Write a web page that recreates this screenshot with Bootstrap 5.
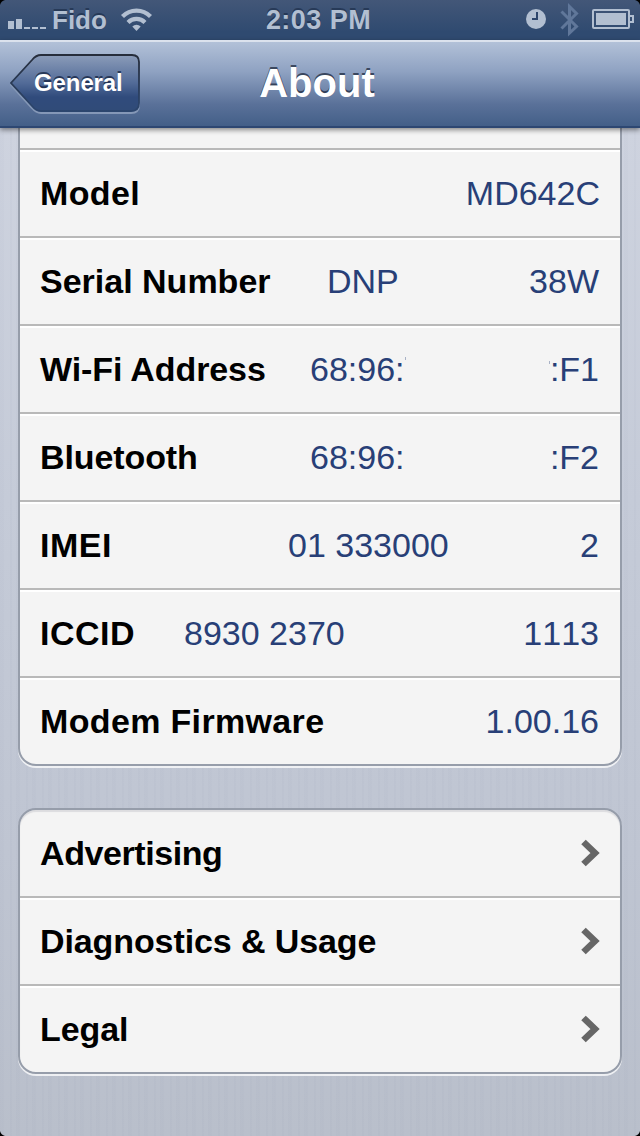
<!DOCTYPE html>
<html lang="en">
<head>
<meta charset="utf-8">
<meta name="viewport" content="width=device-width, initial-scale=1">
<title>About</title>
<link href="https://cdn.jsdelivr.net/npm/bootstrap@5.3.0/dist/css/bootstrap.min.css" rel="stylesheet">
<style>
body{width:640px;height:1136px;overflow:hidden;font-family:"Liberation Sans",Arial,sans-serif;
 background:repeating-linear-gradient(90deg,rgba(70,80,120,.02) 0 4px,transparent 4px 10px,rgba(70,80,120,.025) 10px 12px,transparent 12px 16px),linear-gradient(#ced3df 128px,#c5cbd8 500px,#bfc5d2 850px,#b9bfcb)}
.status-bar{height:40px;background:linear-gradient(#435778,#2f4a70 80%,#2f4a70);color:#b2bfd1;font-size:26px;font-weight:700;line-height:40px;text-shadow:0 -2px 0 rgba(20,36,62,.55);position:relative}
.status-bar svg{display:block}
.clock-text{position:absolute;left:0;right:3px;top:0;text-align:center;font-size:27px;letter-spacing:.45px}
.title-bar{height:88px;background:linear-gradient(#b2c1d8,#8fa2c2 35%,#5a7199 74%,#435f88);border-top:2px solid #dbe2ed;border-bottom:2px solid #2d4772;box-shadow:0 2px 5px rgba(0,0,0,.45);position:relative;z-index:2}
.title-bar h1{position:absolute;inset:0;margin:0;padding-right:6px;line-height:83px;font-size:40px;font-weight:700;color:#fff;text-align:center;text-shadow:0 -2px 0 rgba(30,42,62,.75)}
.back-btn{width:132px;height:62px;margin-left:9px;position:relative;z-index:1;color:#fff;font-size:24px;font-weight:700;line-height:60px;padding-left:25px;letter-spacing:-.1px;text-shadow:0 -2px 0 rgba(20,35,65,.75)}
.back-btn svg{position:absolute;left:0;top:0;z-index:-1}
.settings-group{margin:0 18px;border:2px solid #969daa;border-radius:18px;background:#f4f4f4;box-shadow:0 2px 0 rgba(255,255,255,.75);--bs-list-group-bg:#f4f4f4}
.first-group{border-top:0;border-radius:0 0 18px 18px;padding-top:20px}
.second-group{margin-top:42px;box-shadow:0 2px 0 rgba(255,255,255,.75),inset 0 2px 1px #dcdcdf}
.setting-row{height:88px;padding:0 20px;font-size:34px;line-height:86px;color:#000;background:transparent;border:0;border-top:2px solid #b9b9b9;box-shadow:inset 0 2px 0 #fff;white-space:nowrap}
.setting-row.list-group-item+.setting-row.list-group-item{border-top:2px solid #b9b9b9;margin:0}
.second-group .setting-row:first-child{height:86px;border-top:0;box-shadow:none}
.setting-value{color:#283f77;font-kerning:none;margin-right:1px}
.value-end{margin-right:0}
.w-serial{width:272px}.w-mac{width:289px}.w-imei{width:311px}.w-iccid{width:415px}
.track-wide{letter-spacing:.34px}.track-wider{letter-spacing:.5px}.track-tight{letter-spacing:-.42px}.track-snug{letter-spacing:-.1px}
.trace{position:absolute;width:1px;height:3px;background:#a9b2c6}
.screen-corner{position:absolute;width:6px;height:6px;z-index:5}
</style>
</head>
<body>
<header>
 <div class="status-bar d-flex align-items-center justify-content-between">
  <div class="d-flex align-items-center">
   <svg width="52" height="40" fill="#b2bfd1"><path d="M8 21h6v8H8zM16 19h6v10h-6zM24 27h6v2h-6zM32 27h6v2h-6zM40 27h6v2h-6z"/></svg>
   <span>Fido</span>
   <svg width="48" height="40" viewBox="0 0 48 40"><g fill="none" stroke="#b2bfd1" stroke-width="4.2"><path d="M15.5 16.5a19.5 19.5 0 0 1 28 0M21 22.5a12 12 0 0 1 17 0"/></g><path fill="#b2bfd1" d="M25.3 26.5a6 6 0 0 1 8.4 0l-4.2 4.5z"/></svg>
  </div>
  <div class="clock-text">2:03 PM</div>
  <svg width="120" height="40" viewBox="520 0 120 40">
   <circle cx="536" cy="19" r="10" fill="#b2bfd1"/><path d="M537 12v7h-5" fill="none" stroke="#2d456b" stroke-width="2"/>
   <path d="M561.5 11.5l15 15-7 6.500V6.500l7 7-15 15" fill="none" stroke="#60779a" stroke-width="3"/>
   <rect x="593" y="10" width="36" height="18" rx="1" fill="none" stroke="#b2bfd1" stroke-width="2"/><path fill="#b2bfd1" d="M596 13h30v12h-30z"/><path d="M630 16h3v6h-3" fill="none" stroke="#b2bfd1" stroke-width="2"/>
  </svg>
 </div>
 <nav class="title-bar d-flex align-items-center">
  <a class="back-btn d-block text-decoration-none" href="#"><svg width="132" height="62" viewBox="0 0 132 62"><defs><linearGradient id="b" x2="0" y2="1"><stop stop-color="#8b9cb9"/><stop offset=".5" stop-color="#526b98"/><stop offset=".75" stop-color="#304b7c"/><stop offset="1" stop-color="#304b78"/></linearGradient><linearGradient id="e" x2="0" y2="1"><stop stop-color="#262d3b"/><stop offset="1" stop-color="#2c466e"/></linearGradient></defs><path transform="translate(0 2)" d="M32 2h91q7 0 7 7v41q0 8-8 8H32q-5 0-9-5L2 30 23 7q4-5 9-5z" fill="none" stroke="#8598b7" stroke-width="2"/><path d="M32 2h91q7 0 7 7v41q0 8-8 8H32q-5 0-9-5L2 30 23 7q4-5 9-5z" fill="url(#b)" stroke="url(#e)" stroke-width="1.8"/></svg>General</a>
  <h1>About</h1>
 </nav>
</header>
<main>
 <div class="settings-group first-group list-group">
  <div class="list-group-item setting-row d-flex justify-content-between"><b class="track-wide">Model</b><span class="setting-value value-end">MD642C</span></div>
  <div class="list-group-item setting-row d-flex justify-content-between"><b>Serial Number</b><span class="setting-value w-serial d-flex justify-content-between"><span>DNP</span><span>38W</span></span></div>
  <div class="list-group-item setting-row d-flex justify-content-between"><b class="track-snug">Wi-Fi Address</b><span class="setting-value w-mac d-flex justify-content-between"><span>68:96:</span><span>:F1</span></span><i class="trace" style="left:385px;top:31px"></i><i class="trace" style="left:529px;top:35px"></i></div>
  <div class="list-group-item setting-row d-flex justify-content-between"><b class="track-snug">Bluetooth</b><span class="setting-value w-mac d-flex justify-content-between"><span>68:96:</span><span>:F2</span></span></div>
  <div class="list-group-item setting-row d-flex justify-content-between"><b class="track-wider">IMEI</b><span class="setting-value w-imei d-flex justify-content-between"><span>01 333000</span><span>2</span></span></div>
  <div class="list-group-item setting-row d-flex justify-content-between"><b class="track-wider">ICCID</b><span class="setting-value w-iccid d-flex justify-content-between"><span>8930 2370</span><span>1113</span></span></div>
  <div class="list-group-item setting-row d-flex justify-content-between"><b class="track-wide">Modem Firmware</b><span class="setting-value">1.00.16</span></div>
 </div>
 <div class="settings-group second-group list-group">
  <a class="list-group-item setting-row d-flex justify-content-between align-items-center" href="#"><b class="track-tight">Advertising</b><svg width="20" height="28"><path d="M3.500 3l11.500 11-11.500 11" fill="none" stroke="#666" stroke-width="6.500"/></svg></a>
  <a class="list-group-item setting-row d-flex justify-content-between align-items-center" href="#"><b class="track-snug">Diagnostics &amp; Usage</b><svg width="20" height="28"><path d="M3.500 3l11.500 11-11.500 11" fill="none" stroke="#666" stroke-width="6.500"/></svg></a>
  <a class="list-group-item setting-row d-flex justify-content-between align-items-center" href="#"><b class="track-snug">Legal</b><svg width="20" height="28"><path d="M3.500 3l11.500 11-11.500 11" fill="none" stroke="#666" stroke-width="6.500"/></svg></a>
 </div>
</main>
<svg class="screen-corner top-0 start-0"><path d="M0 0h5Q1 1 0 5z"/></svg>
<svg class="screen-corner top-0 end-0"><path d="M6 0H1q4 1 5 5z"/></svg>
<svg class="screen-corner bottom-0 start-0"><path d="M0 6h5Q1 5 0 1z"/></svg>
<svg class="screen-corner bottom-0 end-0"><path d="M6 6H1q4-1 5-5z"/></svg>
<script src="https://cdn.jsdelivr.net/npm/bootstrap@5.3.0/dist/js/bootstrap.bundle.min.js"></script>
</body>
</html>
